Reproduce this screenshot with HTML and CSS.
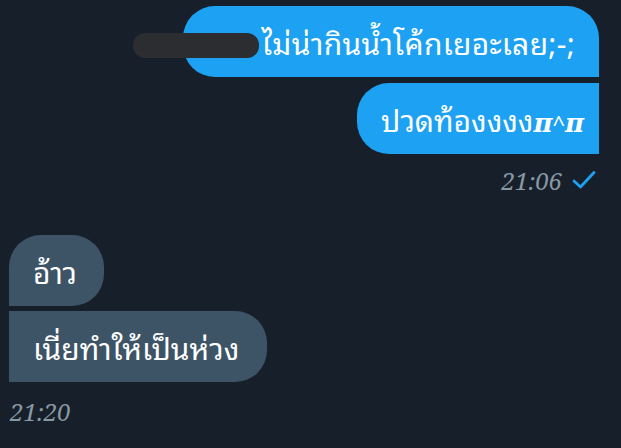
FILE: index.html
```html
<!DOCTYPE html>
<html lang="th">
<head>
<meta charset="utf-8">
<link rel="stylesheet" href="styles.css">
</head>
<body>
<div class="chat">
  <div class="group sent">
    <div class="bubble b1">ไม่น่ากินน้ำโค้กเยอะเลย;-;<span class="scribble"></span></div>
    <div class="bubble b2">ปวดท้องงงง<span class="pi">π</span><span class="caret">^</span><span class="pi">π</span></div>
    <div class="meta">
      <span class="time">21:06</span>
      <svg class="check" width="24" height="20" viewBox="0 0 24 20"><path d="M2 11 L8.5 17 L22 2.5" fill="none" stroke="#1da1f2" stroke-width="2.8" stroke-linecap="round" stroke-linejoin="round"/></svg>
    </div>
  </div>
  <div class="group recv">
    <div class="bubble b3">อ้าว</div>
    <div class="bubble b4">เนี่ยทำให้เป็นห่วง</div>
    <div class="meta"><span class="time">21:20</span></div>
  </div>
</div>
</body>
</html>
```
FILE: styles.css
```css
html, body {
  margin: 0;
  padding: 0;
  background: #17202a;
  width: 621px;
  height: 448px;
  overflow: hidden;
}
.chat {
  display: flex;
  flex-direction: column;
  padding: 6px 22px 0 9px;
  font-family: "Noto Sans Thai Looped", "Noto Sans", sans-serif;
}
.group {
  display: flex;
  flex-direction: column;
  gap: 6px;
}
.sent { align-items: flex-end; }
.recv { align-items: flex-start; margin-top: 40px; gap: 5px; }
.bubble {
  position: relative;
  color: #ffffff;
  font-size: 30px;
  line-height: 71px;
  height: 71px;
  padding: 0 24px;
  box-sizing: border-box;
  white-space: nowrap;
}
.sent .bubble { background: #1da1f2; }
.recv .bubble { background: #3d5466; }
.b1 { width: 416px; text-align: right; border-radius: 32px 32px 0 32px; letter-spacing: 0.3px; }
.b2 { width: 242px; border-radius: 32px 0 0 32px; }
.b3 { width: 95px; border-radius: 32px 32px 32px 0; }
.b4 { width: 258px; border-radius: 0 32px 32px 0; }
.pi {
  font-family: "DejaVu Serif", serif;
  font-style: italic;
  font-weight: bold;
  font-size: 26px;
}
.caret { font-size: 22px; }
.scribble {
  position: absolute;
  left: -50px;
  top: 27px;
  width: 126px;
  height: 25px;
  background: #2b2d30;
  border-radius: 12px;
}
.meta {
  display: flex;
  align-items: center;
  gap: 10px;
  height: 30px;
  margin-top: 5px;
}
.recv .meta { margin-top: 9px; padding-left: 1px; }
.time {
  font-family: "Noto Serif", "Liberation Serif", serif;
  font-style: italic;
  font-size: 24px;
  color: #8899a6;
}
.check { margin-right: 3px; }
```
